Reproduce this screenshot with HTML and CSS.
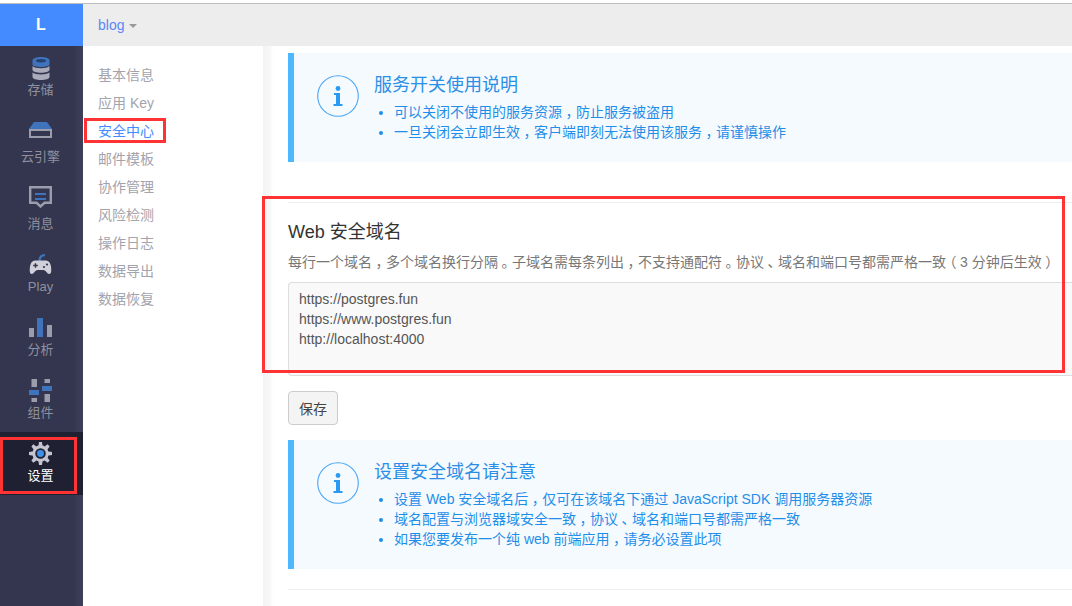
FILE: index.html
```html
<!DOCTYPE html>
<html lang="zh">
<head>
<meta charset="utf-8">
<title>安全中心</title>
<link rel="stylesheet" href="styles.css">
</head>
<body>
<div class="app">
  <aside class="rail">
    <div class="logo">L</div>
    <a class="rail-item">
      <div class="slot off-11">
        <svg width="18" height="23" viewBox="0 0 18 23"><path d="M.5 7.500 v-4C.5 1.500 4.300 0 9 0s8.500 1.500 8.500 3.500v4C17.500 9 13.700 10 9 10S.5 9 .5 7.500z" fill="#3f74bd"/><ellipse cx="9" cy="3.800" rx="5" ry="1.700" fill="#24406f"/><path d="M.5 9c1.500 1.500 4.500 2.200 8.500 2.200s7-.7 8.500-2.200v4c0 1.600-3.800 2.700-8.500 2.700S.5 14.600.5 13z" fill="#a9aaba"/><path d="M.5 15.500c1.500 1.300 4.500 2 8.500 2s7-.7 8.500-2V20c0 1.700-3.800 3-8.500 3S.5 21.700.5 20z" fill="#a9aaba"/></svg>
      </div>
      <span>存储</span>
    </a>
    <a class="rail-item tall">
      <div class="slot off-13">
        <svg width="23" height="16" viewBox="0 0 23 16"><path d="M5 0h13l5 7H0z" fill="#3f74bd"/><rect x="1" y="8" width="21" height="7" fill="none" stroke="#9c9dac" stroke-width="2"/></svg>
      </div>
      <span>云引擎</span>
    </a>
    <a class="rail-item tall">
      <div class="slot off-10">
        <svg width="23" height="22" viewBox="0 0 23 22"><path d="M1.200 1.200h20.600v15.600h-6.300L11.500 20.500l-4-3.700H1.200z" fill="none" stroke="#9c9dac" stroke-width="2.400"/><path d="M6 8h11M6 13h11" stroke="#3f74bd" stroke-width="2"/></svg>
      </div>
      <span>消息</span>
    </a>
    <a class="rail-item">
      <div class="slot off-11">
        <svg width="23" height="21" viewBox="0 0 23 21"><path d="M10.500 7c0-4 1.500-5.800 5.500-5.800" fill="none" stroke="#3f74bd" stroke-width="2.200"/><path d="M6 6.500h11c2.600 0 4.400 2 5 6 .5 3.800.4 7.500-1.600 7.500-2.500 0-3.400-4-5.900-4H8.500c-2.500 0-3.400 4-5.900 4-2 0-2.100-3.700-1.600-7.500.6-4 2.400-6 5-6z" fill="#cfd0d9"/><path d="M4.200 11.500h4.600M6.500 9.200v4.600" stroke="#33364e" stroke-width="1.400"/><circle cx="15" cy="13" r="1.100" fill="#33364e"/><circle cx="18" cy="10.500" r="1.100" fill="#33364e"/></svg>
      </div>
      <span>Play</span>
    </a>
    <a class="rail-item">
      <div class="slot off-12">
        <svg width="23" height="19" viewBox="0 0 23 19"><rect x="0" y="10" width="5" height="9" fill="#9c9dac"/><rect x="8" y="0" width="6" height="19" fill="#3f74bd"/><rect x="18" y="7" width="5" height="12" fill="#9c9dac"/></svg>
      </div>
      <span>分析</span>
    </a>
    <a class="rail-item">
      <div class="slot off-10">
        <svg width="23" height="23" viewBox="0 0 23 23"><rect x="2.500" y="0" width="5.500" height="8" fill="#9c9dac"/><rect x="0" y="11" width="10" height="5" fill="#3f74bd"/><rect x="2.500" y="19" width="5.500" height="4" fill="#9c9dac"/><rect x="15.500" y="0" width="5.500" height="4" fill="#9c9dac"/><rect x="13" y="7" width="10" height="5" fill="#3f74bd"/><rect x="15.500" y="15" width="5.500" height="8" fill="#9c9dac"/></svg>
      </div>
      <span>组件</span>
    </a>
    <a class="rail-item active">
      <div class="slot off-10">
        <svg width="23" height="23" viewBox="0 0 24 24"><g fill="#c4c5d0"><path d="M10.500 0h3l.8 5h-4.600z"/><path d="M10.500 0h3l.8 5h-4.600z" transform="rotate(45 12 12)"/><path d="M10.500 0h3l.8 5h-4.600z" transform="rotate(90 12 12)"/><path d="M10.500 0h3l.8 5h-4.600z" transform="rotate(135 12 12)"/><path d="M10.500 0h3l.8 5h-4.600z" transform="rotate(180 12 12)"/><path d="M10.500 0h3l.8 5h-4.600z" transform="rotate(225 12 12)"/><path d="M10.500 0h3l.8 5h-4.600z" transform="rotate(270 12 12)"/><path d="M10.500 0h3l.8 5h-4.600z" transform="rotate(315 12 12)"/></g><circle cx="12" cy="12" r="7" fill="#1f2133" stroke="#c4c5d0" stroke-width="3"/><circle cx="12" cy="12" r="3.600" fill="#3d8fe8"/></svg>
      </div>
      <span>设置</span>
    </a>
  </aside>

  <div class="workspace">
    <header class="topbar"><a class="app-name">blog</a><i class="caret"></i></header>
    <div class="panes">
      <nav class="subnav">
        <a>基本信息</a>
        <a>应用 Key</a>
        <a class="current">安全中心</a>
        <a>邮件模板</a>
        <a>协作管理</a>
        <a>风险检测</a>
        <a>操作日志</a>
        <a>数据导出</a>
        <a>数据恢复</a>
      </nav>
      <main class="content">
        <section class="notice first">
          <svg class="notice-icon" width="42" height="42" viewBox="0 0 42 42"><circle cx="21" cy="21" r="20.300" fill="none" stroke="#4aa6f5" stroke-width="1.100"/><circle cx="21" cy="13.500" r="2.400" fill="#2b9af3"/><path d="M17 18h6v11h2.500v2h-9v-2H19v-9h-2z" fill="#2b9af3"/></svg>
          <div class="notice-body">
            <h3>服务开关使用说明</h3>
            <ul>
              <li>可以关闭不使用的服务资源<span class="pu">，</span>防止服务被盗用</li>
              <li>一旦关闭会立即生效<span class="pu">，</span>客户端即刻无法使用该服务<span class="pu">，</span>请谨慎操作</li>
            </ul>
          </div>
        </section>
        <hr class="rule top-rule">
        <h2 class="title">Web 安全域名</h2>
        <p class="help">每行一个域名<span class="pu">，</span>多个域名换行分隔<span class="pu">。</span>子域名需每条列出<span class="pu">，</span>不支持通配符<span class="pu">。</span>协议<span class="pu">、</span>域名和端口号都需严格一致<span class="pu">（</span>3 分钟后生效<span class="pu">）</span></p>
        <div class="domains">https://postgres.fun<br>https://www.postgres.fun<br>http://localhost:4000</div>
        <button class="save" type="button">保存</button>
        <section class="notice second">
          <svg class="notice-icon" width="42" height="42" viewBox="0 0 42 42"><circle cx="21" cy="21" r="20.300" fill="none" stroke="#4aa6f5" stroke-width="1.100"/><circle cx="21" cy="13.500" r="2.400" fill="#2b9af3"/><path d="M17 18h6v11h2.500v2h-9v-2H19v-9h-2z" fill="#2b9af3"/></svg>
          <div class="notice-body">
            <h3>设置安全域名请注意</h3>
            <ul>
              <li>设置 Web 安全域名后<span class="pu">，</span>仅可在该域名下通过 JavaScript SDK 调用服务器资源</li>
              <li>域名配置与浏览器域安全一致<span class="pu">，</span>协议<span class="pu">、</span>域名和端口号都需严格一致</li>
              <li>如果您要发布一个纯 web 前端应用<span class="pu">，</span>请务必设置此项</li>
            </ul>
          </div>
        </section>
        <hr class="rule bottom-rule">
      </main>
    </div>
  </div>
</div>
<div class="mark mark-nav"></div>
<div class="mark mark-settings"></div>
<div class="mark mark-domains"></div>
</body>
</html>
```
FILE: styles.css
```css
* { box-sizing: border-box; }
html, body { margin: 0; height: 100%; overflow: hidden; background: #fff; }
body {
  padding-top: 3px;
  font-family: "Liberation Sans", "Noto Sans CJK SC", sans-serif;
  font-size: 14px;
  color: #555;
}
.app {
  display: flex;
  height: 603px;
  border-top: 1px solid #bdbdbd;
}
.rail {
  width: 83px;
  flex: none;
  background: linear-gradient(90deg, #33364e 0, #33364e 88%, #3e4159 100%);
  display: flex;
  flex-direction: column;
}
.logo {
  height: 42px;
  background: #448bff;
  color: #fff;
  font-weight: 700;
  font-size: 16px;
  display: flex;
  align-items: center;
  justify-content: center;
  padding-right: 1px;
}
.rail-item {
  height: 63px;
  padding-right: 2px;
  display: flex;
  flex-direction: column;
  align-items: center;
  color: #8f909f;
  font-size: 13px;
  line-height: 17px;
}
.rail-item.tall { height: 67px; }
.slot { height: 35px; }
.slot svg { display: block; }
.rail-item.tall .slot { height: 39px; }
.off-10 { padding-top: 10px; }
.off-11 { padding-top: 11px; }
.off-12 { padding-top: 12px; }
.off-13 { padding-top: 13px; }
.rail-item.active { background: #1f2133; color: #fff; }
.workspace { flex: 1; min-width: 0; display: flex; flex-direction: column; }
.topbar {
  height: 42px;
  flex: none;
  background: #ededed;
  display: flex;
  align-items: center;
  padding-left: 15px;
  gap: 5px;
}
.app-name { color: #5b87f5; font-size: 14px; }
.caret {
  width: 0;
  height: 0;
  border-left: 4px solid transparent;
  border-right: 4px solid transparent;
  border-top: 4px solid #999;
  margin-top: 2px;
}
.panes { flex: 1; display: flex; min-height: 0; }
.subnav {
  width: 180px;
  flex: none;
  padding: 15px 0 0 15px;
  display: flex;
  flex-direction: column;
}
.subnav a { height: 28px; line-height: 28px; color: #a3a3ad; font-size: 14px; }
.subnav a.current { color: #448bff; }
.content {
  flex: 1;
  min-width: 0;
  padding: 7px 0 0 25px;
  background: linear-gradient(90deg, #f3f3f3 0, #f7f7f7 7px, #fff 10px);
  overflow: hidden;
}
.notice {
  display: flex;
  background: #f5faff;
  border-left: 6px solid #4db8ff;
  padding-left: 23px;
}
.notice.first { height: 109px; }
.notice.second { height: 129px; margin-top: 15px; }
.notice-icon { flex: none; margin-top: 22px; }
.notice-body { margin-left: 15px; }
.notice h3 { margin: 21px 0 0; font-size: 18px; font-weight: 400; line-height: 22px; color: #2b8fe6; }
.notice ul { margin: 6px 0 0; padding: 0 0 0 20px; }
.notice li { font-size: 14px; line-height: 20px; color: #1e8ee8; white-space: nowrap; }
.pu { font-feature-settings: "halt"; padding: 0 3.5px; }
.rule { border: 0; border-top: 1px solid #eee; margin: 0; }
.top-rule { margin-top: 40px; }
.bottom-rule { margin-top: 20px; }
.title { margin: 18px 0 0; font-size: 18px; font-weight: 400; line-height: 22px; color: #333; }
.help { margin: 10px 0 0; line-height: 18px; color: #777; font-size: 14px; white-space: nowrap; }
.domains {
  margin-top: 11px;
  height: 94px;
  border: 1px solid #ddd;
  border-right: 0;
  border-radius: 4px 0 0 4px;
  background: #f9f9f9;
  padding: 6px 10px;
  line-height: 20px;
  font-size: 14px;
  color: #555;
}
.save {
  display: block;
  margin-top: 15px;
  width: 50px;
  height: 34px;
  border: 1px solid #ccc;
  border-radius: 4px;
  background: #f4f4f4;
  color: #444;
  font: 14px "Liberation Sans", "Noto Sans CJK SC", sans-serif;
  padding: 0;
}
.mark { position: absolute; border: 3px solid #ff3333; pointer-events: none; }
.mark-nav { left: 84px; top: 118px; width: 82px; height: 25px; }
.mark-settings { left: 0; top: 437px; width: 77px; height: 57px; }
.mark-domains { left: 262px; top: 196px; width: 803px; height: 177px; }
```
